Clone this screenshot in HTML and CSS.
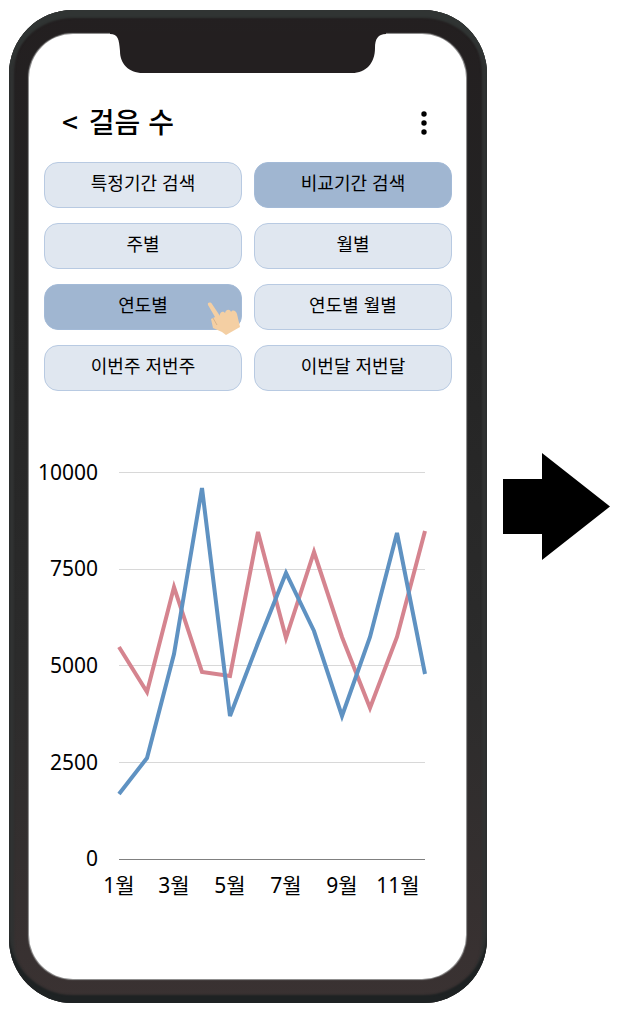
FILE: index.html
```html
<!DOCTYPE html>
<html lang="ko">
<head>
<meta charset="utf-8">
<meta name="viewport" content="width=device-width, initial-scale=1">
<title>걸음 수</title>
<link rel="stylesheet" href="styles.css">
</head>
<body>
<main class="scene">
  <section class="phone">
    <div class="screen">
      <svg class="notch" viewBox="0 0 276 39" aria-hidden="true">
        <path d="M0 0H276C268 0 265 5 265 14C265 29 256 39 242 39H33C18 39 10 29 10 17C9 5 8 0 0 0Z"/>
      </svg>
      <header class="header">
        <h1 class="title"><button class="back" type="button" aria-label="뒤로">&lt;</button> 걸음 수</h1>
        <button class="menu" type="button" aria-label="메뉴">
          <svg viewBox="0 0 6 24" width="6" height="24"><circle cx="3" cy="3" r="2.700"/><circle cx="3" cy="12" r="2.700"/><circle cx="3" cy="21" r="2.700"/></svg>
        </button>
      </header>
      <nav class="filters">
        <button class="filter" type="button">특정기간 검색</button>
        <button class="filter selected" type="button">비교기간 검색</button>
        <button class="filter" type="button">주별</button>
        <button class="filter" type="button">월별</button>
        <button class="filter selected" type="button">연도별
          <svg class="hand" viewBox="0 0 34 34" aria-hidden="true">
            <path class="skin" d="M1 3C0 0 4 0 5 2L13 14C12 11 16 8 18 11C19 7 23 7 24 10C26 7 29 9 30 12L33 25L19 33L15 30L6 26L4 17L8 15Z"/>
            <path class="crease" d="M6 16L10 23"/>
          </svg>
        </button>
        <button class="filter" type="button">연도별 월별</button>
        <button class="filter" type="button">이번주 저번주</button>
        <button class="filter" type="button">이번달 저번달</button>
      </nav>
      <svg class="chart" viewBox="29 450 437 460" role="img" aria-label="월별 걸음 수 비교">
        <path class="grid" d="M119 472.500H425M119 569.500H425M119 665.500H425M119 762.500H425"/>
        <path class="axis" d="M119 859.500H425"/>
        <g class="values">
          <text x="98" y="480">10000</text>
          <text x="98" y="576">7500</text>
          <text x="98" y="673">5000</text>
          <text x="98" y="770">2500</text>
          <text x="98" y="866">0</text>
        </g>
        <g class="months">
          <text x="119" y="893">1월</text>
          <text x="174" y="893">3월</text>
          <text x="230" y="893">5월</text>
          <text x="286" y="893">7월</text>
          <text x="342" y="893">9월</text>
          <text x="398" y="893">11월</text>
        </g>
        <polyline class="line red" points="119,647 147,692 174,587 202,672 230,676 258,532 286,638 314,552 342,637 370,708 397,637 425,531"/>
        <polyline class="line blue" points="119,794 147,758 174,654 202,488 230,716 258,643 286,573 314,631 342,716 370,637 397,533 425,674"/>
      </svg>
    </div>
  </section>
  <svg class="arrow" viewBox="0 0 107 107" aria-hidden="true"><path d="M0 26H39V0L107 53.500L39 107V81H0Z"/></svg>
</main>
</body>
</html>
```
FILE: styles.css
```css
* {
  box-sizing: border-box;
}

body {
  margin: 0;
  background: #fff;
  color: #000;
  font-family: "Liberation Sans", "Noto Sans CJK KR", sans-serif;
}

button {
  border: 0;
  padding: 0;
  background: none;
  color: inherit;
  font: inherit;
  cursor: pointer;
}

.scene {
  display: flex;
  align-items: center;
  gap: 16px;
  padding: 10px 12px 16px 9px;
}

.phone {
  flex: 1;
  max-width: 478px;
  padding: 24px 21px 24px 20px;
  border-radius: 64px;
  background: linear-gradient(#231f20, #242424 30%, #2b2b2b 65%, #3a3232);
  box-shadow: inset 0 8px 2px #303433, inset 0 -8px 2px #1e2223, inset 5px 0 2px #303232, inset -5px 0 2px #303232;
}

.screen {
  display: flex;
  flex-direction: column;
  padding-bottom: 69px;
  border-radius: 44px;
  background: #fff;
  box-shadow: 0 0 1px 1px #9a9a9a;
}

.notch {
  align-self: center;
  width: 276px;
  max-width: 100%;
  margin-top: -2px;
  border-top: 2px solid #231f20;
  fill: #231f20;
}

.header {
  display: flex;
  align-items: center;
  justify-content: space-between;
  padding: 26px 39px 19px 33px;
}

.title {
  margin: 0;
  font-family: "Noto Sans CJK KR", sans-serif;
  font-size: 28px;
  font-weight: 500;
  line-height: 44px;
}

.back {
  margin-right: 3px;
}

.menu {
  display: flex;
  padding-top: 3px;
}

.filters {
  display: grid;
  grid-template-columns: 1fr 1fr;
  gap: 15px 12px;
  padding: 0 14px 0 15px;
}

.filter {
  position: relative;
  height: 46px;
  padding-bottom: 6px;
  border: 1px solid #b8cae2;
  border-radius: 14px;
  background: #e0e7f0;
  font-family: "Noto Sans CJK KR", sans-serif;
  font-size: 18px;
}

.selected {
  border-color: #a3bad7;
  background: #a0b6d1;
}

.hand {
  position: absolute;
  right: 0;
  bottom: -7px;
  width: 34px;
  height: 34px;
}

.skin {
  fill: #f4cfa3;
}

.crease {
  fill: none;
  stroke: #d9b48b;
  stroke-width: 1px;
}

.chart {
  width: 100%;
  margin-top: 59px;
  font-family: "Noto Sans", "Noto Sans CJK KR", sans-serif;
  font-size: 21px;
}

.values {
  text-anchor: end;
}

.months {
  text-anchor: middle;
}

.grid {
  stroke: #d8d8d8;
}

.axis {
  stroke: #808080;
}

.line {
  fill: none;
  stroke-width: 4px;
}

.red {
  stroke: #d5848f;
}

.blue {
  stroke: #5f92c2;
}

.arrow {
  flex: none;
  width: 107px;
}
```
